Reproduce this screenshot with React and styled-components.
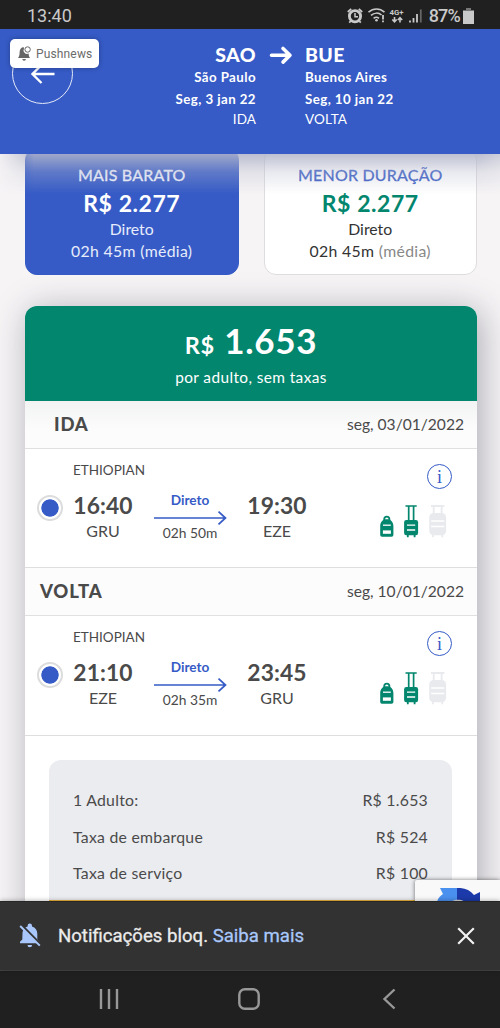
import React from 'react'
import styled, { createGlobalStyle } from 'styled-components'

const blue = '#365bc6'
const green = '#03866e'

const GlobalStyle = createGlobalStyle`
  * {
    box-sizing: border-box;
  }
  body {
    margin: 0;
    background: #f6f4f5;
    font-family: Lato, 'Open Sans', sans-serif;
    color: #4a4a4a;
  }
`

const Screen = styled.div`
  display: flex;
  flex-direction: column;
  width: 500px;
  height: 1028px;
  overflow: hidden;
`

/* status bar */

const StatusBar = styled.div`
  display: flex;
  align-items: center;
  justify-content: space-between;
  flex: none;
  height: 29px;
  padding: 2px 26px 0 27px;
  background: #202020;
  color: #c9c9c9;
  font-family: Roboto, sans-serif;
  font-size: 18px;
  line-height: 28px;
`

const StatusIcons = styled.div`
  display: flex;
  align-items: center;
`

const Battery = styled.span`
  margin: 0 3px 0 5px;
  font-weight: 500;
  letter-spacing: -0.8px;
`

/* trip header */

const Header = styled.header`
  position: relative;
  z-index: 2;
  display: flex;
  flex: none;
  height: 125px;
  padding-top: 14px;
  background: ${blue};
  color: #fff;

  &::after {
    content: '';
    position: absolute;
    top: 100%;
    left: 0;
    right: 0;
    height: 40px;
    background: linear-gradient(rgba(178, 181, 202, 0.85), rgba(184, 187, 206, 0.32) 45%, rgba(190, 192, 208, 0));
    mask-image: linear-gradient(to right, rgba(0, 0, 0, 0.1), #000 34px, #000 480px, rgba(0, 0, 0, 0.7));
  }
`

const BackButton = styled.button`
  display: flex;
  align-items: center;
  justify-content: center;
  width: 61px;
  height: 61px;
  margin-left: 12px;
  padding: 0;
  border: 1px solid #e4e9f8;
  border-radius: 50%;
  background: none;
`

const PushBadge = styled.div`
  position: absolute;
  top: 10px;
  left: 10px;
  display: flex;
  align-items: center;
  gap: 5px;
  width: 89px;
  height: 29px;
  padding-left: 8px;
  border-radius: 5px;
  background: #fff;
  box-shadow: 0 0 5px rgba(0, 0, 0, 0.3);
  color: #6b6b6b;
  font-family: Roboto, sans-serif;
  font-size: 12px;
  letter-spacing: 0.15px;
`

const Route = styled.div`
  display: flex;
  margin-left: 83px;
`

const RouteArrow = styled.svg`
  width: 24px;
  height: 24px;
  margin: 0 12px 0 13px;
`

const Place = styled.div`
  width: 100px;
  text-align: ${p => p.$align || 'left'};
  white-space: nowrap;
`

const Iata = styled.div`
  font-size: 19.5px;
  font-weight: 900;
  letter-spacing: 0.4px;
  line-height: 24px;
`

const City = styled.div`
  font-size: 13.3px;
  font-weight: 700;
  letter-spacing: 0.42px;
  line-height: 20px;
`

const TripDate = styled(City)`
  line-height: 24px;
`

const Leg = styled.div`
  font-size: 13.5px;
  letter-spacing: 0.1px;
  line-height: 16px;
`

/* page */

const Content = styled.main`
  position: relative;
  flex: 1;
  min-height: 0;
  overflow: hidden;
  padding: 0 23px 0 25px;
  background: #f6f4f5;
`

const Options = styled.div`
  display: flex;
  gap: 25px;
  margin-top: -6px;
`

const Option = styled.div`
  flex: 1;
  height: 127px;
  padding-top: 15px;
  border: 1px solid ${p => (p.$active ? blue : '#dddddf')};
  border-radius: 12px;
  background: ${p => (p.$active ? blue : '#fff')};
  color: ${p => (p.$active ? '#e6ecfb' : '#333')};
  text-align: center;
  font-size: 15.8px;
  line-height: 22px;
`

const OptionTitle = styled.div`
  color: ${p => (p.$active ? '#eef2fc' : blue)};
  font-size: 16px;
  letter-spacing: 0.2px;
  line-height: 22px;
  -webkit-text-stroke: 0.3px;
`

const OptionPrice = styled.div`
  margin-top: 2px;
  color: ${p => (p.$active ? '#fff' : green)};
  font-size: 23px;
  font-weight: 700;
  letter-spacing: 0.55px;
  line-height: 30px;
`

const OptionTime = styled.div`
  letter-spacing: 0.33px;
`

const Muted = styled.span`
  color: ${p => (p.$active ? 'inherit' : '#888')};
`

const Fare = styled.section`
  height: 700px;
  margin-top: 31px;
  border-radius: 12px;
  background: #fff;
  box-shadow: 4px 4px 34px rgba(40, 40, 60, 0.36);
`

const FareHead = styled.div`
  height: 95px;
  padding-top: 14px;
  border-radius: 12px 12px 0 0;
  background: ${green};
  color: #fff;
  text-align: center;
`

const FarePrice = styled.div`
  font-size: 35px;
  font-weight: 700;
  letter-spacing: 0.7px;
  line-height: 40px;
`

const Currency = styled.span`
  font-size: 23.5px;
`

const FareNote = styled.div`
  font-size: 15.4px;
  letter-spacing: 0.4px;
  line-height: 24px;
`

const LegHead = styled.div`
  display: flex;
  align-items: center;
  justify-content: space-between;
  height: 48px;
  padding: 0 13px 2px ${p => p.$indent}px;
  border-bottom: 1px solid #e0e0e0;
  background: ${p => (p.$shaded ? 'linear-gradient(#f2f3f3, #fcfcfc 60%)' : '#fcfcfc')};
  font-size: 15.6px;
`

const LegName = styled.h2`
  margin: 0;
  font-size: 18.5px;
  font-weight: 900;
  letter-spacing: 0.8px;
`

const Segment = styled.div`
  display: flex;
  height: ${p => p.$height}px;
  padding: 11px 25px 0 12px;
  border-bottom: 1px solid #dedede;
`

const Radio = styled.span`
  flex: none;
  width: 26px;
  height: 26px;
  margin-top: 35px;
  border: 2.5px solid #dcdcdc;
  border-radius: 50%;
  background: radial-gradient(circle, ${blue} 8.3px, #fff 9px);
`

const Flight = styled.div`
  margin-left: 10px;
`

const Airline = styled.div`
  margin-bottom: 11px;
  font-size: 13.5px;
  line-height: 20px;
`

const Times = styled.div`
  display: grid;
  grid-template-columns: 60px 74px 60px;
  column-gap: 20px;
  text-align: center;
  white-space: nowrap;
`

const Time = styled.div`
  font-size: 22.8px;
  font-weight: 700;
  letter-spacing: 0.1px;
  line-height: 28px;
`

const Airport = styled.div`
  font-size: 16px;
  line-height: 24px;
`

const Direct = styled.div`
  margin-bottom: 1px;
  color: ${blue};
  font-size: 13.6px;
  font-weight: 700;
  line-height: 19px;
`

const Line = styled.svg`
  display: block;
  width: 74px;
  height: 14px;
`

const Duration = styled.div`
  font-size: 13.8px;
  line-height: 15px;
`

const Extras = styled.div`
  display: flex;
  flex-direction: column;
  align-items: flex-end;
  gap: 15px;
  margin-left: auto;
  padding-top: 4px;
`

const Info = styled.span`
  display: flex;
  align-items: center;
  justify-content: center;
  width: 25px;
  height: 25px;
  border: 1px solid ${blue};
  border-radius: 50%;
  color: ${blue};
  font-family: 'Liberation Serif', serif;
  font-size: 18px;
  line-height: 1;
`

const Bags = styled.svg`
  width: 68px;
  height: 34px;
  margin-right: 5px;
`

const Summary = styled.div`
  height: 200px;
  margin: 24px 25px 0 24px;
  padding-top: 22px;
  border-radius: 12px;
  background: #ebecf0;
  font-size: 15.8px;
  letter-spacing: 0.26px;
`

const SummaryRow = styled.div`
  display: flex;
  justify-content: space-between;
  padding: 0 24px;
  line-height: 36.6px;
`

const BuyButton = styled.div`
  height: 48px;
  margin-top: 8px;
  background: #efb63d;
`

const Captcha = styled.div`
  position: absolute;
  right: 0;
  bottom: 0;
  width: 85px;
  height: 21px;
  border-radius: 2px 0 0 0;
  background: #f9f9f9;
  box-shadow: 0 0 4px rgba(0, 0, 0, 0.55);

  svg {
    display: block;
    margin: 8px 0 0 22px;
  }
`

/* browser message and system navigation */

const Snackbar = styled.div`
  position: relative;
  z-index: 2;
  display: flex;
  align-items: center;
  flex: none;
  height: 69px;
  padding: 0 25px 0 18px;
  border-top: 1px solid #262626;
  background: #323232;
  box-shadow: 0 0 5px rgba(0, 0, 0, 0.35);
  color: #ececec;
  font-family: Roboto, sans-serif;
  font-size: 18.6px;
`

const Message = styled.div`
  flex: 1;
  margin-left: 16px;
  -webkit-text-stroke: 0.3px;
`

const More = styled.span`
  color: #a9c7fa;
`

const NavBar = styled.nav`
  display: flex;
  flex: none;
  align-items: center;
  justify-content: space-between;
  height: 58px;
  padding: 0 103px 2px 97px;
  border-top: 1px solid #484848;
  background: #202020;
`

const HomeIcon = styled.svg`
  width: 24px;
  height: 24px;
  margin-right: 4px;
`

const legs = [
  { name: 'IDA', indent: 29, date: 'seg, 03/01/2022', from: 'GRU', to: 'EZE', out: '16:40', arrive: '19:30', time: '02h 50m', height: 119 },
  { name: 'VOLTA', indent: 15, date: 'seg, 10/01/2022', from: 'EZE', to: 'GRU', out: '21:10', arrive: '23:45', time: '02h 35m', height: 120 }
]

const prices = [
  ['1 Adulto:', 'R$ 1.653'],
  ['Taxa de embarque', 'R$ 524'],
  ['Taxa de serviço', 'R$ 100']
]

const SystemIcons = () => (
  <svg width="78" height="20" viewBox="345 5 78 20" fill="none" stroke="#c9c9c9" strokeWidth="1.8">
    <circle cx="354" cy="15.3" r="5.6" strokeWidth="2.8" />
    <path d="M354 12v3.800h3" strokeWidth="1.5" />
    <path d="M346.800 11l3.400-3.200M361.200 11l-3.400-3.200M349.800 20l-1.600 1.700M358.200 20l1.600 1.700" />
    <path d="M367.500 11.200c4.800-4.200 11.200-4.200 16 0M370 14.400c3.300-2.900 7.600-2.900 10.600-.4M372.600 17.300c1.900-1.400 3.600-1.400 5.400 0" strokeWidth="1.6" />
    <circle cx="375.500" cy="19.300" r="1.300" fill="#c9c9c9" stroke="none" />
    <path d="M382 14v4.500M382 19.600v1.700" />
    <text x="388.500" y="13.500" fill="#c9c9c9" stroke="none" fontFamily="Roboto, sans-serif" fontWeight="700" fontSize="7.800">4G+</text>
    <path d="M393.500 16v4.500m-2.200-2l2.200 2.300 2.200-2.300M399 21.500v-4.500m-2.200 2l2.200-2.300 2.200 2.300" strokeWidth="1.6" />
    <path d="M409 19.500v2M412.500 17v4.500M416 13v8.500" />
    <path d="M419.800 8.500v13" stroke="#666" />
  </svg>
)

const BagIcons = () => (
  <Bags viewBox="379 504 68 34" fill="none">
    <g stroke={green} strokeWidth="1.8">
      <path d="M384.200 520.500v-1.200a2.600 2.600 0 0 1 5.200 0v1.200" />
      <path d="M380.200 526.500c0-4.500 2.400-7.200 6.600-7.200s6.600 2.700 6.600 7.200v8.400q0 1.800-1.800 1.800h-9.600q-1.800 0-1.800-1.800z" fill={green} stroke="none" />
      <path d="M383 525.200h7.800" stroke="#fff" strokeWidth="1.300" />
      <path d="M382.900 530.400h8v3.400h-8z" fill="#fff" stroke="none" />
      <path d="M405.500 506h11.200M408.700 506v15M413.600 506v15" strokeWidth="1.700" />
      <rect x="404.100" y="520" width="14" height="15.200" rx="2.200" fill={green} stroke="none" />
      <path d="M407 525.200h8.200M407 530h8.200" stroke="#fff" strokeWidth="1.300" />
      <path d="M407.800 534.500v2.800M414.600 534.500v2.800" />
    </g>
    <g stroke="#e9eaee" strokeWidth="1.800">
      <path d="M431 506h13.400M433.700 506v8M441.600 506v8" />
      <rect x="429.200" y="513" width="16.900" height="22.200" rx="4.500" fill="#e9eaee" stroke="none" />
      <path d="M431.200 521h13M431.200 526.500h13" stroke="#fff" strokeWidth="1.300" />
      <path d="M433 534.500v2.800M442.300 534.500v2.800" />
    </g>
  </Bags>
)

const FlightLeg = ({ leg, shaded }) => (
  <>
    <LegHead $indent={leg.indent} $shaded={shaded}>
      <LegName>{leg.name}</LegName>
      <span>{leg.date}</span>
    </LegHead>
    <Segment $height={leg.height}>
      <Radio />
      <Flight>
        <Airline>ETHIOPIAN</Airline>
        <Times>
          <div>
            <Time>{leg.out}</Time>
            <Airport>{leg.from}</Airport>
          </div>
          <div>
            <Direct>Direto</Direct>
            <Line viewBox="0 0 74 14" fill="none" stroke={blue} strokeWidth="1.700">
              <path d="M1 7h71.500M65.500 .6L72.500 7l-7 6.400" />
            </Line>
            <Duration>{leg.time}</Duration>
          </div>
          <div>
            <Time>{leg.arrive}</Time>
            <Airport>{leg.to}</Airport>
          </div>
        </Times>
      </Flight>
      <Extras>
        <Info>i</Info>
        <BagIcons />
      </Extras>
    </Segment>
  </>
)

const App = () => (
  <Screen>
    <GlobalStyle />
    <StatusBar>
      <span>13:40</span>
      <StatusIcons>
        <SystemIcons />
        <Battery>87%</Battery>
        <svg width="11" height="16" fill="#c9c9c9">
          <path d="M0 2.500h11V16H0z" />
          <path d="M3 0h5v2.500H3z" fill="#777" />
        </svg>
      </StatusIcons>
    </StatusBar>

    <Header>
      <BackButton>
        <svg width="24" height="20" fill="none" stroke="#fff" strokeWidth="2.300">
          <path d="M23.500 10H1.500M10.500 1L1.500 10l9 9" />
        </svg>
      </BackButton>
      <PushBadge>
        <svg width="13" height="15" fill="#666">
          <path d="M5.500 1C2.600 1.500 1.600 4 1.600 6.500 1.600 9.500 1 10.500 0 12h12c-1-1.200-1.300-2.500-1.300-4.500A3.600 3.600 0 0 1 6 2.500z" />
          <path d="M4.300 13h3.600a1.800 1.800 0 0 1-3.600 0z" />
          <circle cx="9.600" cy="3.500" r="2.700" fill="none" stroke="#666" />
        </svg>
        Pushnews
      </PushBadge>
      <Route>
        <Place $align="right">
          <Iata>SAO</Iata>
          <City>São Paulo</City>
          <TripDate>Seg, 3 jan 22</TripDate>
          <Leg>IDA</Leg>
        </Place>
        <RouteArrow fill="none" stroke="#fff" strokeWidth="3.600" strokeLinecap="round" strokeLinejoin="round">
          <path d="M2.500 12.300h18M14 5.500l7 6.800-7 6.800" />
        </RouteArrow>
        <Place>
          <Iata>BUE</Iata>
          <City>Buenos Aires</City>
          <TripDate>Seg, 10 jan 22</TripDate>
          <Leg>VOLTA</Leg>
        </Place>
      </Route>
    </Header>

    <Content>
      <Options>
        <Option $active>
          <OptionTitle $active>MAIS BARATO</OptionTitle>
          <OptionPrice $active>R$ 2.277</OptionPrice>
          <div>Direto</div>
          <OptionTime>02h 45m <Muted $active>(média)</Muted></OptionTime>
        </Option>
        <Option>
          <OptionTitle>MENOR DURAÇÃO</OptionTitle>
          <OptionPrice>R$ 2.277</OptionPrice>
          <div>Direto</div>
          <OptionTime>02h 45m <Muted>(média)</Muted></OptionTime>
        </Option>
      </Options>

      <Fare>
        <FareHead>
          <FarePrice><Currency>R$</Currency> 1.653</FarePrice>
          <FareNote>por adulto, sem taxas</FareNote>
        </FareHead>
        {legs.map((leg, i) => <FlightLeg key={leg.name} leg={leg} shaded={i === 0} />)}
        <Summary>
          {prices.map(([label, value]) => (
            <SummaryRow key={label}>
              <span>{label}</span>
              <span>{value}</span>
            </SummaryRow>
          ))}
          <BuyButton />
        </Summary>
      </Fare>

      <Captcha>
        <svg width="44" height="14">
          <path d="M3 0h18v14H0C1 10 3 8 6 6z" fill="#4a90ee" />
          <path d="M20 0c7-.5 13 2 17 7l6-3v10H20z" fill="#1c3aa9" />
          <path d="M14 14c3-3 11-3 14 0z" fill="#d5d8de" />
        </svg>
      </Captcha>
    </Content>

    <Snackbar>
      <svg width="24" height="26" viewBox="0 0 24 26" fill="#a9c7fa">
        <path d="M4.500 9.500C5 6.300 7 4.300 9.600 3.600V2.800a2.200 2.200 0 0 1 4.400 0v.8c3.400.9 5.300 3.700 5.300 7.200v5.700l2 2.300v1.400H2v-1.400l2.300-2.300z" />
        <path d="M9.500 22h4.600a2.300 2.300 0 0 1-4.600 0z" />
        <path d="M3.200 2L23 21.800" stroke="#323232" strokeWidth="2.600" />
        <path d="M2.200 3L21.800 22.600" stroke="#a9c7fa" strokeWidth="2" />
      </svg>
      <Message>Notificações bloq. <More>Saiba mais</More></Message>
      <svg width="18" height="18" stroke="#f2f2f2" strokeWidth="2.200">
        <path d="M1.200 1.200l15.600 15.600M16.800 1.200L1.200 16.800" />
      </svg>
    </Snackbar>

    <NavBar>
      <svg width="24" height="22" stroke="#989898" strokeWidth="2.400">
        <path d="M4 1v20M12 1v20M20 1v20" />
      </svg>
      <HomeIcon fill="none" stroke="#989898" strokeWidth="2.400">
        <rect x="2.300" y="2.300" width="19.400" height="19.400" rx="5.500" />
      </HomeIcon>
      <svg width="16" height="22" fill="none" stroke="#989898" strokeWidth="2.400">
        <path d="M13.500 1.500L3.500 11l10 9.500" />
      </svg>
    </NavBar>
  </Screen>
)

export default App
